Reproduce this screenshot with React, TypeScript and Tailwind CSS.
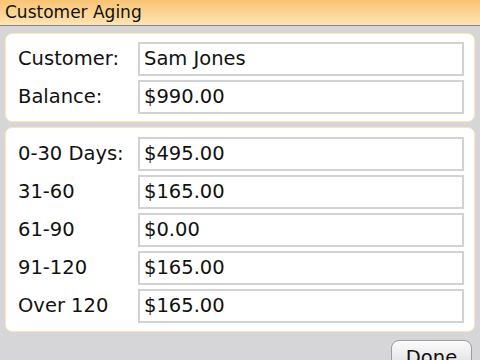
const summary = [
  { label: "Customer:", value: "Sam Jones" },
  { label: "Balance:", value: "$990.00" },
];

const aging = [
  { label: "0-30 Days:", value: "$495.00" },
  { label: "31-60", value: "$165.00" },
  { label: "61-90", value: "$0.00" },
  { label: "91-120", value: "$165.00" },
  { label: "Over 120", value: "$165.00" },
];

function Field({ label, value }: { label: string; value: string }) {
  return (
    <div className="flex items-center h-[34px]">
      <div className="w-[120px] text-[19.5px] text-[#111]">{label}</div>
      <div className="flex-1 h-full border-2 border-[#d2d2d2] flex items-center pl-[4px] text-[19.5px] text-[#111]">
        {value}
      </div>
    </div>
  );
}

export default function App() {
  return (
    <div
      className="w-[480px] h-[360px] overflow-hidden bg-[#d6d5d7] flex flex-col"
      style={{ fontFamily: '"DejaVu Sans", sans-serif' }}
    >
      <div className="h-[26px] shrink-0 bg-gradient-to-b from-[#f8c372] to-[#ffe4b3] border-b border-[#858585] pl-[5px] text-[17px] leading-[24px] text-[#111]">
        Customer Aging
      </div>

      <div className="mx-[5px] mt-[7px] rounded-[7px] border border-[#fde3b8] bg-white pt-[8px] pb-[7px] pl-[12px] pr-[10px] flex flex-col gap-[4px]">
        {summary.map((r) => (
          <Field key={r.label} {...r} />
        ))}
      </div>

      <div className="mx-[5px] mt-[5px] rounded-[7px] border border-[#fde3b8] bg-white pt-[9px] pb-[8px] pl-[12px] pr-[10px] flex flex-col gap-[4px]">
        {aging.map((r) => (
          <Field key={r.label} {...r} />
        ))}
      </div>

      <div className="flex justify-end pr-[8px] mt-[8px]">
        <button className="w-[81px] h-[34px] shrink-0 rounded-[8px] border border-[#9c9c9c] bg-gradient-to-b from-[#fbfbfb] to-[#d9d9d9] text-[19.5px] text-[#111] leading-[34px]">
          Done
        </button>
      </div>
    </div>
  );
}
